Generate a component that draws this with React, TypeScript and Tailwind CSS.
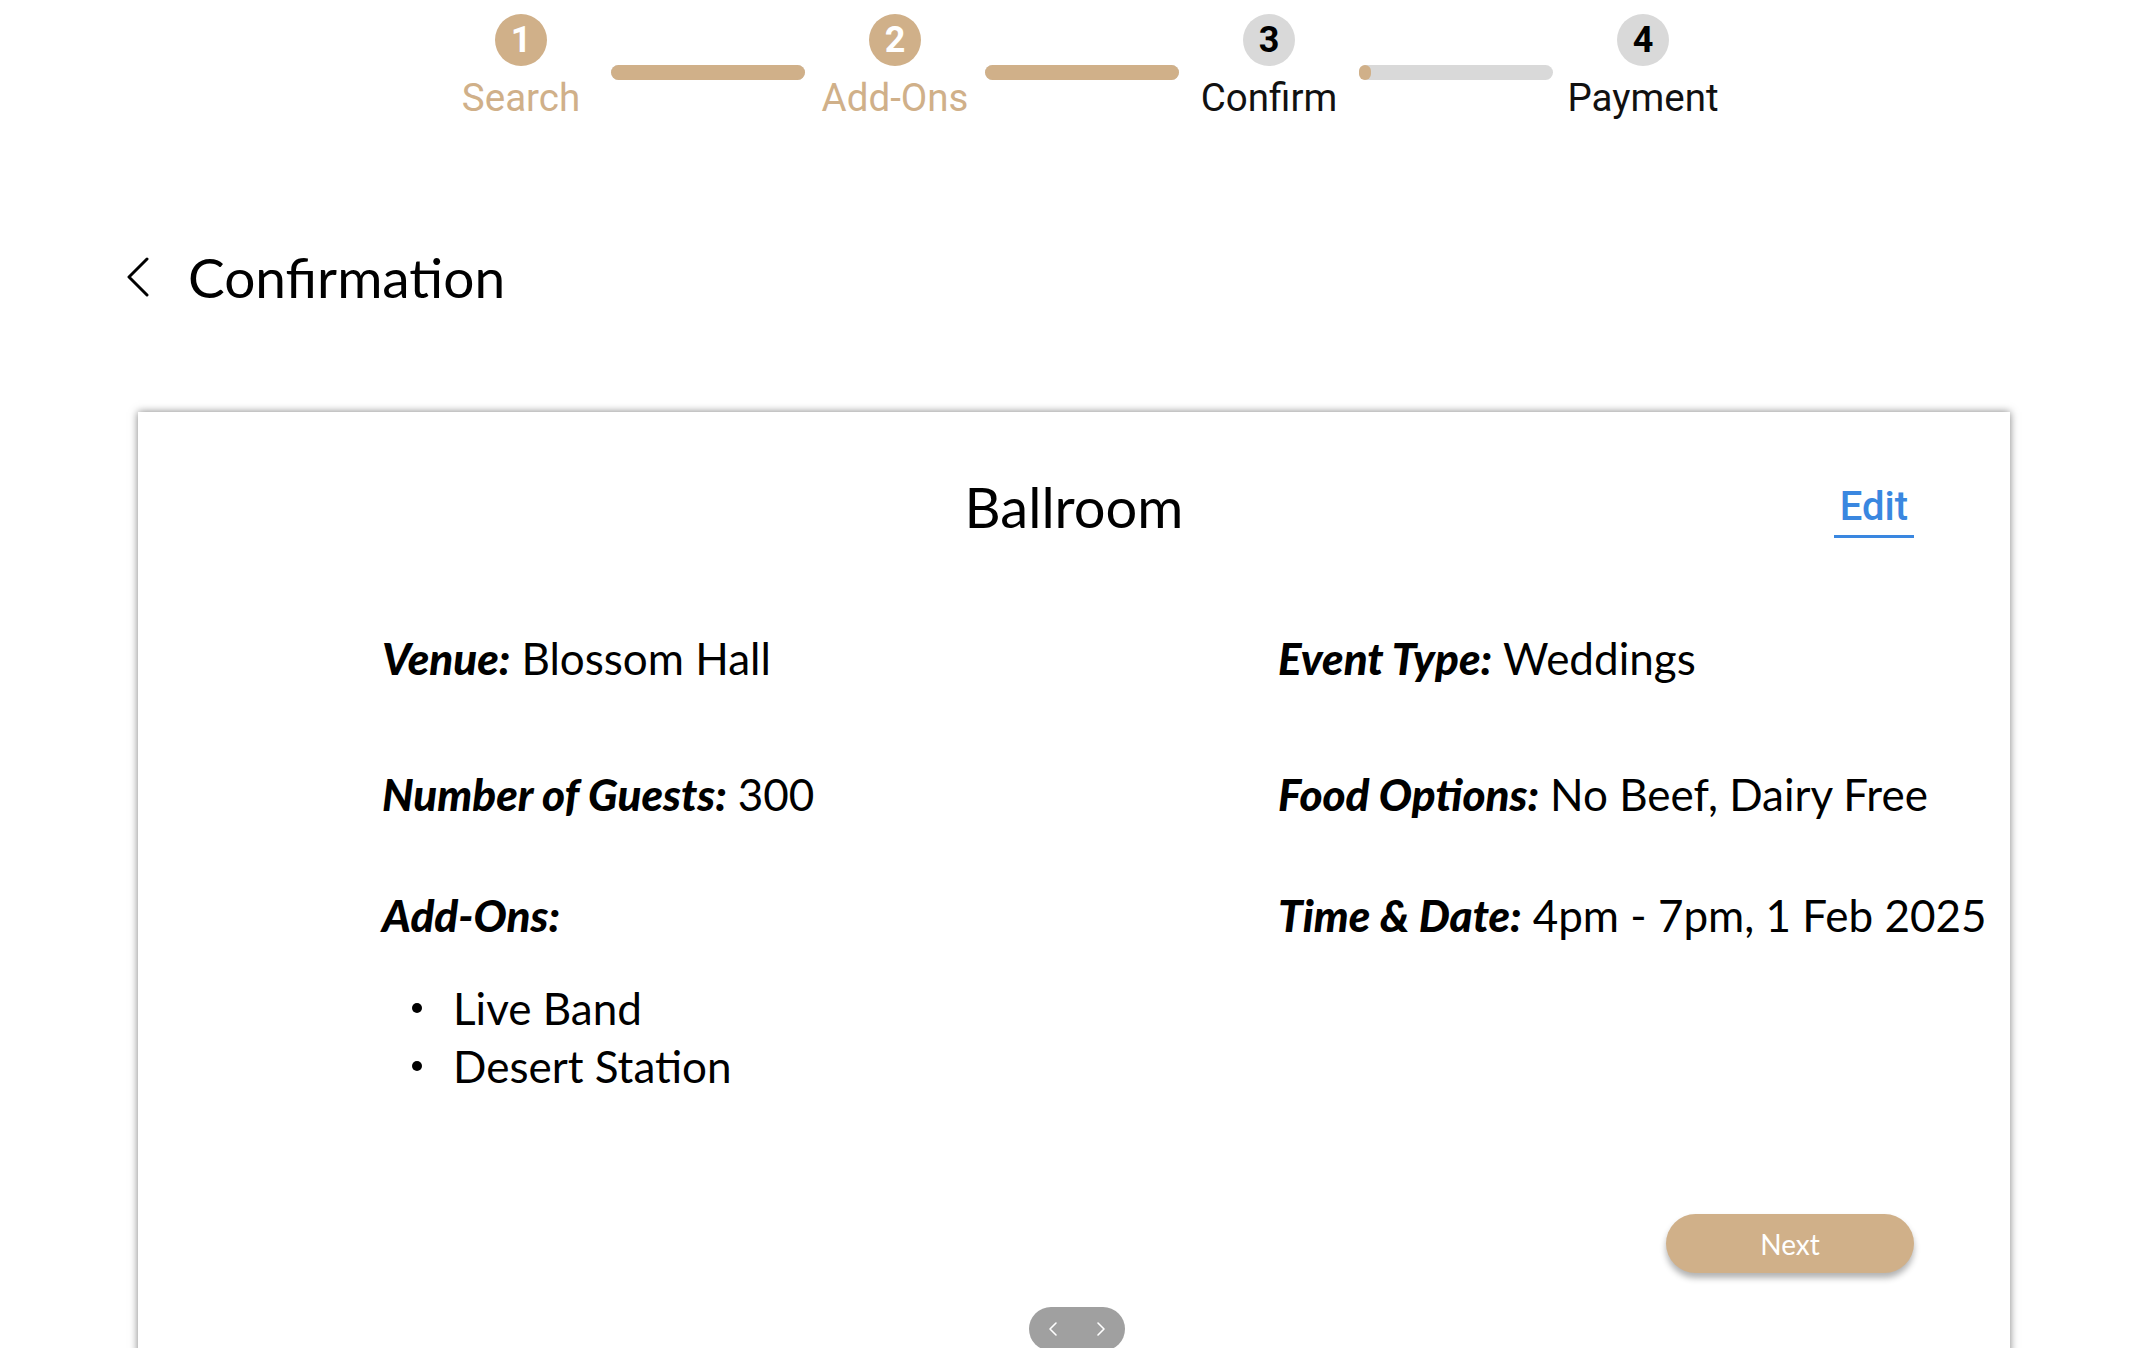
import { ChevronLeft, ChevronRight } from 'lucide-react'

const TAN = 'bg-[#d0b089]'

const STEPS = [
  { n: 1, label: 'Search', done: true },
  { n: 2, label: 'Add-Ons', done: true },
  { n: 3, label: 'Confirm', done: false },
  { n: 4, label: 'Payment', done: false },
]

function Step({ n, label, done }: { n: number; label: string; done: boolean }) {
  return (
    <div className="flex w-[180px] flex-col items-center">
      <div
        className={
          done
            ? `flex h-[52px] w-[52px] items-center justify-center rounded-full ${TAN} text-[36px] font-bold text-white`
            : 'flex h-[52px] w-[52px] items-center justify-center rounded-full bg-[#d9d9d9] text-[36px] font-bold text-black'
        }
      >
        {n}
      </div>
      <div className={done ? 'mt-[12px] text-[38.5px] leading-[40px] text-[#d0b089]' : 'mt-[12px] text-[38.5px] leading-[40px] text-[#111]'}>
        {label}
      </div>
    </div>
  )
}

function Bar({ fill }: { fill: 'full' | 'start' }) {
  return (
    <div className="mt-[51px] h-[15px] w-[194px] rounded-full bg-[#d9d9d9]">
      <div className={fill === 'full' ? `h-full w-full rounded-full ${TAN}` : `h-full w-[12px] rounded-full ${TAN}`} />
    </div>
  )
}

function Field({ label, value }: { label: string; value?: string }) {
  return (
    <div className="flex h-[60px] items-center whitespace-nowrap">
      <span className="font-black italic">{label}</span>
      {value && <span className="ml-[11px]">{value}</span>}
    </div>
  )
}

export default function App() {
  return (
    <div className="relative min-h-screen overflow-hidden bg-white font-['Roboto',sans-serif] text-black">
      {/* stepper */}
      <div className="flex justify-center pl-[10px] pt-[14px]">
        <Step {...STEPS[0]} />
        <Bar fill="full" />
        <Step {...STEPS[1]} />
        <Bar fill="full" />
        <Step {...STEPS[2]} />
        <Bar fill="start" />
        <Step {...STEPS[3]} />
      </div>

      {/* header */}
      <div className="mt-[127px] flex items-center pl-[127px] font-['Lato',sans-serif]">
        <svg width="22" height="40" viewBox="0 0 22 40" fill="none" stroke="black" strokeWidth="3" strokeLinecap="round" strokeLinejoin="round">
          <polyline points="20,2 2,20 20,38" />
        </svg>
        <h1 className="ml-[39px] text-[55px] leading-[64px]">Confirmation</h1>
      </div>

      {/* card */}
      <div className="ml-[138px] mt-[103px] min-h-[1000px] w-[1872px] bg-white pt-[63px] font-['Lato',sans-serif] text-[44px] shadow-[0_0_8px_rgba(0,0,0,0.5)]">
        <div className="grid grid-cols-[1fr_auto_1fr] items-center">
          <div />
          <h2 className="text-[56px] leading-[64px]">Ballroom</h2>
          <div className="mt-[8px] flex justify-end pr-[96px]">
            <button className="border-b-[3px] border-[#3a87e0] px-[6px] pb-[5px] font-['Roboto',sans-serif] text-[40px] font-medium leading-[46px] text-[#3a87e0]">
              Edit
            </button>
          </div>
        </div>

        <div className="mt-[89px] pl-[244px]">
          <div className="flex">
            <div className="w-[896px]"><Field label="Venue:" value="Blossom Hall" /></div>
            <Field label="Event Type:" value="Weddings" />
          </div>
          <div className="mt-[76px] flex">
            <div className="w-[896px]"><Field label="Number of Guests:" value="300" /></div>
            <Field label="Food Options:" value="No Beef, Dairy Free" />
          </div>
          <div className="mt-[61px] flex">
            <div className="w-[896px]"><Field label="Add-Ons:" /></div>
            <Field label="Time & Date:" value="4pm - 7pm, 1 Feb 2025" />
          </div>
          <ul className="mt-[34px]">
            {['Live Band', 'Desert Station'].map((s) => (
              <li key={s} className="flex h-[58px] items-center">
                <span className="ml-[30px] h-[10px] w-[10px] rounded-full bg-black" />
                <span className="ml-[31px]">{s}</span>
              </li>
            ))}
          </ul>
        </div>

        <div className="mt-[119px] flex justify-end pr-[96px]">
          <button className={`h-[59px] w-[248px] rounded-full ${TAN} text-[28px] text-white shadow-[0_5px_6px_rgba(0,0,0,0.3)]`}>
            Next
          </button>
        </div>
      </div>

      {/* carousel pager */}
      <div className="fixed bottom-[-3px] left-1/2 flex h-[44px] w-[96px] -translate-x-1/2 items-center justify-between rounded-full bg-[#a0a0a0] px-[12px] text-white">
        <ChevronLeft className="h-[24px] w-[24px]" strokeWidth={1.6} />
        <ChevronRight className="h-[24px] w-[24px]" strokeWidth={1.6} />
      </div>
    </div>
  )
}
